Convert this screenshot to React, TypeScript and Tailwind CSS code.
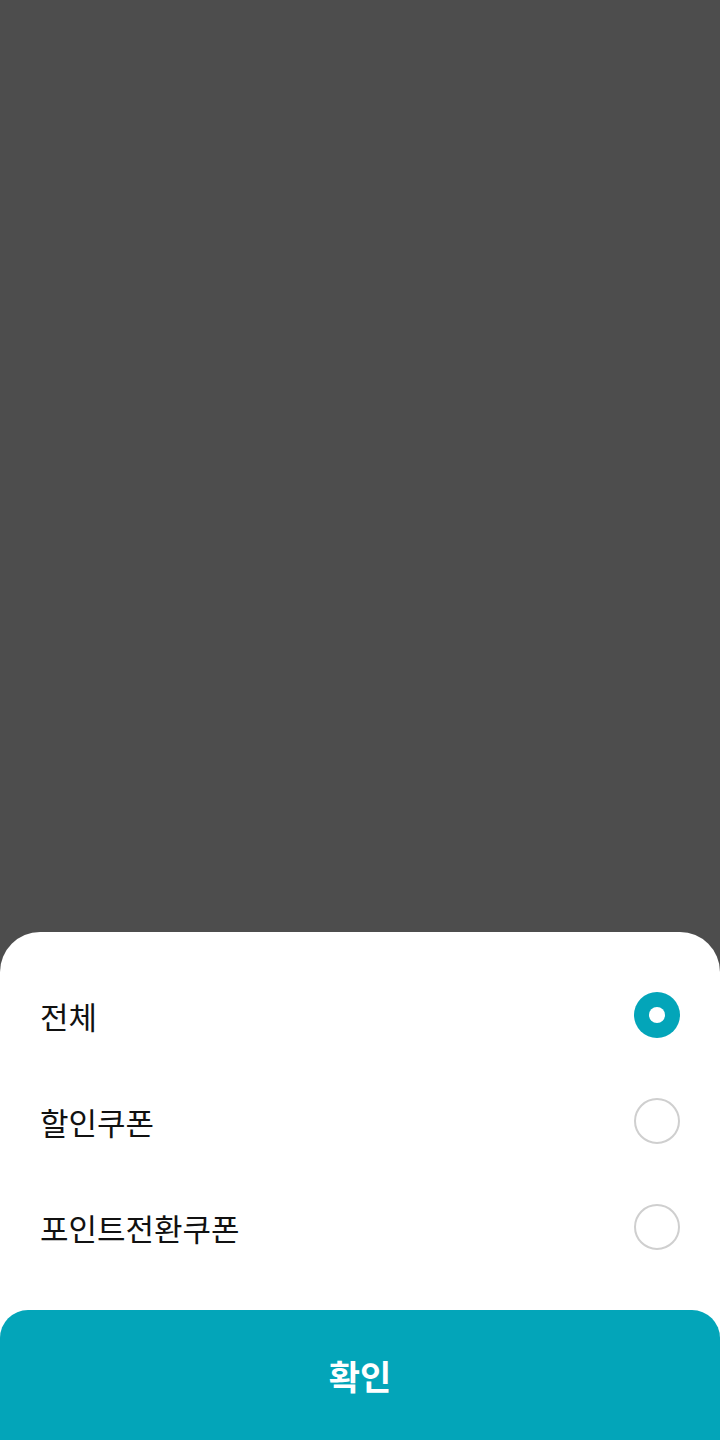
import { useState } from "react"

const options = ["전체", "할인쿠폰", "포인트전환쿠폰"]

const Radio = ({ checked }: { checked: boolean }) =>
  checked ? (
    <span className="flex h-[46px] w-[46px] items-center justify-center rounded-full bg-[#03a5b9]">
      <span className="h-[16px] w-[16px] rounded-full bg-white" />
    </span>
  ) : (
    <span className="h-[46px] w-[46px] rounded-full border-2 border-[#cfcfcf] bg-white" />
  )

export default function App() {
  const [selected, setSelected] = useState(0)

  return (
    <div
      className="flex h-[1440px] w-full flex-col bg-[#4d4d4d]"
      style={{ fontFamily: '"Noto Sans CJK KR", "Noto Sans", sans-serif' }}
    >
      {/* Dimmed backdrop */}
      <div className="flex-1" />

      {/* Bottom sheet */}
      <div className="flex flex-col rounded-t-[40px] bg-white pt-[30px]">
        {options.map((label, i) => (
          <button
            key={label}
            onClick={() => setSelected(i)}
            className="flex h-[106px] items-center justify-between pl-[40px] pr-[40px] text-left"
          >
            <span className="text-[31px] leading-none text-[#111111]">{label}</span>
            <Radio checked={selected === i} />
          </button>
        ))}

        <button className="mt-[30px] flex h-[130px] items-center justify-center rounded-t-[28px] bg-[#03a5b9] text-[34px] font-bold text-white">
          확인
        </button>
      </div>
    </div>
  )
}
